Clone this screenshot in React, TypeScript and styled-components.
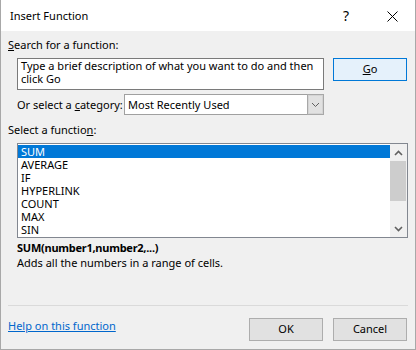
import styled, { createGlobalStyle } from 'styled-components';

const GlobalStyle = createGlobalStyle`
  html, body { margin: 0; padding: 0; background: #f0f0f0; }
  body { font-family: 'Noto Sans', 'Open Sans', sans-serif; color: #000; }
  * { box-sizing: border-box; }
`;

// --- window frame ---
const Dialog = styled.div`
  width: 416px;
  height: 350px;
  display: flex;
  flex-direction: column;
  background: #f0f0f0;
  border: 1px solid #a8a8a8;
  border-top: none;
  font-size: 11px;
`;

const TitleBar = styled.div`
  height: 31px;
  flex: none;
  display: flex;
  align-items: center;
  background: #fff;
  padding-left: 9px;
`;

const Title = styled.span`
  flex: 1;
  font-size: 11px;
  line-height: 16px;
`;

const TitleButton = styled.div`
  width: 46px;
  height: 31px;
  display: flex;
  align-items: center;
  justify-content: center;
  font-size: 14px;
  line-height: 16px;
  padding-top: 1px;
`;

const Body = styled.div`
  flex: 1;
  display: flex;
  flex-direction: column;
  padding: 6px 7px 8px 7px;
`;

const Label = styled.div<{ $indent?: boolean; $gap?: number }>`
  line-height: 16px;
  padding-left: ${p => (p.$indent ? 9 : 0)}px;
  margin-top: ${p => p.$gap || 0}px;
`;

// --- search ---
const SearchRow = styled.div`
  display: flex;
  align-items: flex-start;
  gap: 9px;
  margin-top: 5px;
  padding-left: 9px;
`;

const SearchBox = styled.div`
  width: 307px;
  height: 32px;
  background: #fff;
  border: 1px solid #7a7a7a;
  padding: 0 3px;
  line-height: 13px;
  overflow: hidden;
`;

const Button = styled.button<{ $focus?: boolean }>`
  width: 74px;
  height: 23px;
  padding: 0 0 2px;
  margin: 0;
  font-family: inherit;
  font-size: 11px;
  line-height: 19px;
  color: #000;
  background: ${p => (p.$focus ? '#e5f1fb' : '#e1e1e1')};
  border: 1px solid ${p => (p.$focus ? '#0078d7' : '#adadad')};
  border-radius: 0;
`;

// --- category ---
const CategoryRow = styled.div`
  display: flex;
  align-items: center;
  margin-top: 4px;
  padding-left: 9px;
`;

const CategoryLabel = styled.span`
  width: 107px;
  line-height: 16px;
`;

const Select = styled.div`
  width: 200px;
  height: 21px;
  display: flex;
  background: #fff;
  border: 1px solid #a0a0a0;
`;

const SelectValue = styled.span`
  flex: 1;
  padding-left: 3px;
  line-height: 19px;
`;

const DropButton = styled.span`
  width: 17px;
  margin: -1px -1px -1px 0;
  display: flex;
  align-items: center;
  justify-content: center;
  background: #e1e1e1;
  border: 1px solid #a8a8a8;
  box-shadow: inset 0 0 0 1px #d4d4d4;
`;

// --- function list ---
const ListBox = styled.div`
  display: flex;
  margin: 5px 0 0 9px;
  width: 391px;
  height: 95px;
  background: #fff;
  border: 1px solid #828790;
`;

const Rows = styled.div`
  flex: 1;
  padding: 1px 0;
`;

const Row = styled.div<{ $selected?: boolean }>`
  height: 13px;
  line-height: 13px;
  padding-left: 3px;
  background: ${p => (p.$selected ? '#0078d7' : 'transparent')};
  color: ${p => (p.$selected ? '#fff' : '#000')};
`;

const ScrollBar = styled.div`
  width: 17px;
  display: flex;
  flex-direction: column;
  background: #f0f0f0;
`;

const ScrollArrow = styled.div`
  height: 17px;
  display: flex;
  align-items: center;
  justify-content: center;
`;

const Thumb = styled.div`
  height: 40px;
  margin: 0 1px 0 0;
  background: #cdcdcd;
`;

const Track = styled.div`
  flex: 1;
`;

// --- description ---
const Syntax = styled.div`
  margin: 2px 0 0 9px;
  font-weight: 700;
  line-height: 15px;
  letter-spacing: -0.25px;
`;

const Description = styled.div`
  margin-left: 9px;
  line-height: 15px;
`;

const Separator = styled.div`
  margin-top: auto;
  height: 1px;
  background: #dadada;
`;

const Footer = styled.div`
  display: flex;
  align-items: flex-start;
  gap: 10px;
  margin-top: 12px;
  padding-right: 1px;
`;

const HelpLink = styled.a`
  flex: 1;
  margin-top: 1px;
  color: #0066cc;
  text-decoration: underline;
  line-height: 14px;
  cursor: pointer;
`;

const Chevron = ({ up, color = '#606060', w = 1.6 }: { up?: boolean; color?: string; w?: number }) => (
  <svg width="9" height="6" viewBox="0 0 9 6">
    <path d={up ? 'M1 5 L4.5 1.5 L8 5' : 'M1 1 L4.5 4.5 L8 1'} fill="none" stroke={color} strokeWidth={w} />
  </svg>
);

const functions = ['SUM', 'AVERAGE', 'IF', 'HYPERLINK', 'COUNT', 'MAX', 'SIN'];

export default function App() {
  return (
    <>
      <GlobalStyle />
      <Dialog>
        <TitleBar>
          <Title>Insert Function</Title>
          <TitleButton>?</TitleButton>
          <TitleButton>
            <svg width="11" height="11" viewBox="0 0 11 11">
              <path d="M0.5 0.5 L10.5 10.5 M10.5 0.5 L0.5 10.5" stroke="#000" strokeWidth="1" />
            </svg>
          </TitleButton>
        </TitleBar>

        <Body>
          <Label><u>S</u>earch for a function:</Label>
          <SearchRow>
            <SearchBox>Type a brief description of what you want to do and then click Go</SearchBox>
            <Button $focus><u>G</u>o</Button>
          </SearchRow>

          <CategoryRow>
            <CategoryLabel>Or select a <u>c</u>ategory:</CategoryLabel>
            <Select>
              <SelectValue>Most Recently Used</SelectValue>
              <DropButton><Chevron w={1} /></DropButton>
            </Select>
          </CategoryRow>

          <Label $gap={7}>Select a functio<u>n</u>:</Label>
          <ListBox>
            <Rows>
              {functions.map((f, i) => (
                <Row key={f} $selected={i === 0}>{f}</Row>
              ))}
            </Rows>
            <ScrollBar>
              <ScrollArrow><Chevron up /></ScrollArrow>
              <Thumb />
              <Track />
              <ScrollArrow><Chevron /></ScrollArrow>
            </ScrollBar>
          </ListBox>

          <Syntax>SUM(number1,number2,...)</Syntax>
          <Description>Adds all the numbers in a range of cells.</Description>

          <Separator />
          <Footer>
            <HelpLink>Help on this function</HelpLink>
            <Button>OK</Button>
            <Button>Cancel</Button>
          </Footer>
        </Body>
      </Dialog>
    </>
  );
}
